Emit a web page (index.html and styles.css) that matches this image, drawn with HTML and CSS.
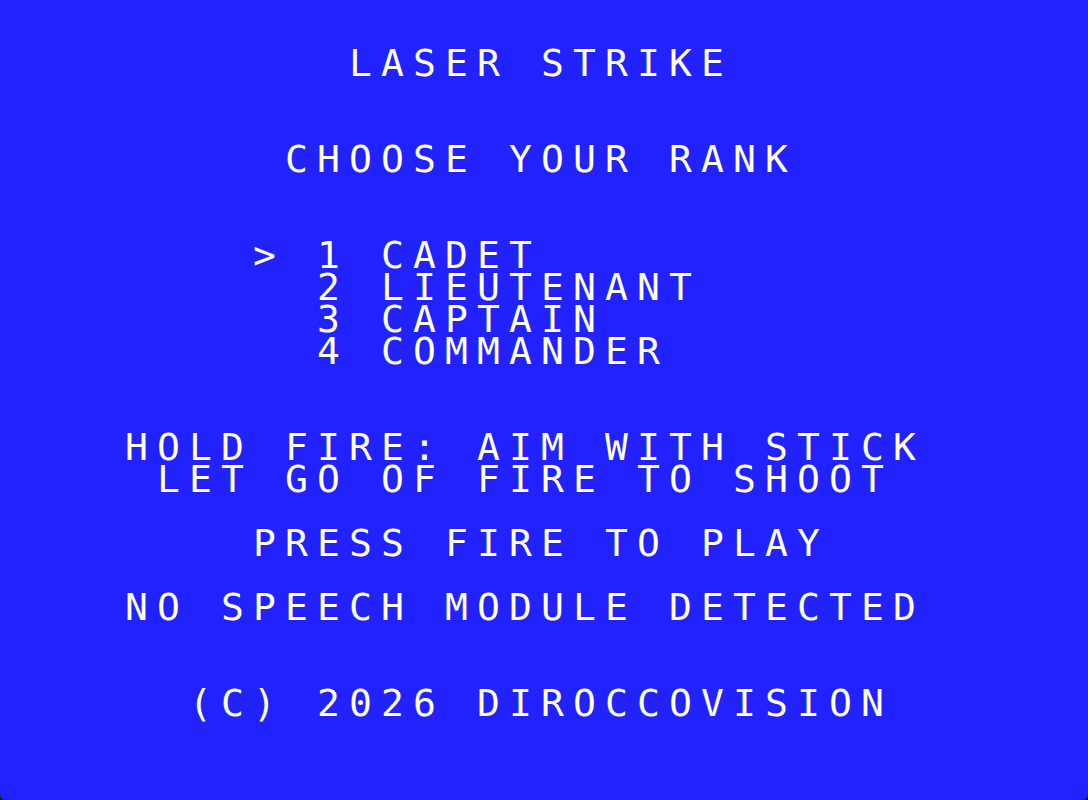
FILE: index.html
```html
<!DOCTYPE html>
<html lang="en">
<head>
	<meta charset="UTF-8">
	<title>Laser Strike</title>
	<link rel="stylesheet" href="styles.css">
</head>
<body>
	<div class="screen">
		<div class="line col-11">LASER STRIKE</div>
		<div class="line col-9 skip-2">CHOOSE YOUR RANK</div>

		<div class="menu skip-2">
			<div class="line col-8">&gt; 1 CADET</div>
			<div class="line col-8">  2 LIEUTENANT</div>
			<div class="line col-8">  3 CAPTAIN</div>
			<div class="line col-8">  4 COMMANDER</div>
		</div>

		<div class="line col-4 skip-2">HOLD FIRE: AIM WITH STICK</div>
		<div class="line col-5">LET GO OF FIRE TO SHOOT</div>
		<div class="line col-8 skip-1">PRESS FIRE TO PLAY</div>
		<div class="line col-4 skip-1">NO SPEECH MODULE DETECTED</div>
		<div class="line col-6 skip-2">(C) 2026 DIROCCOVISION</div>
	</div>
</body>
</html>
```

FILE: styles.css
```css
/* 34 x 25 character grid, each cell 32px */
html{
	background: #1b1e16;
	height: 100%;
}
body{
	margin: 0;
	height: 100%;
}
.screen{
	box-sizing: border-box;
	height: 800px;
	padding-top: 47px;
	padding-left: 0;
	background: #2222ff;
	border-radius: 0 0 6px 6px;
	color: #fff;
	font-family: "DejaVu Sans Mono", "Liberation Mono", monospace;
	font-size: 38px;
	letter-spacing: calc(32px - 0.60205em);
}
.line{
	height: 32px;
	line-height: 32px;
	white-space: pre;
	margin-left: -3px;
}

/* column offsets */
.col-4{ padding-left: 128px; }
.col-5{ padding-left: 160px; }
.col-6{ padding-left: 192px; }
.col-8{ padding-left: 256px; }
.col-9{ padding-left: 288px; }
.col-11{ padding-left: 352px; }

/* blank rows before a line */
.skip-1{ margin-top: 32px; }
.skip-2{ margin-top: 64px; }
```
